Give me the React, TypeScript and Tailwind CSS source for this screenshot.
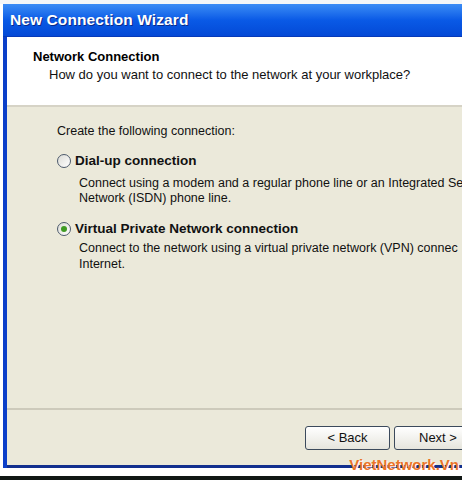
import React from "react";

export default function App() {
  const font = { fontFamily: '"Liberation Sans", Arial, sans-serif' };
  return (
    <div className="w-[462px] h-[480px] overflow-hidden bg-white flex flex-col" style={font}>
      <div className="h-[4px] bg-[#f4f6f8] shrink-0" />
      <div className="flex-1 flex min-h-0 pl-[3px]">
        <div className="flex-1 flex flex-col min-w-0 bg-[#0b3fc9] pl-[4px] pb-[0px] -mr-[20px]">
          {/* title bar */}
          <div className="h-[33px] shrink-0 -ml-[4px] pl-[7px] flex items-center bg-gradient-to-b from-[#3b8cf5] via-[#0a5ae6] to-[#0449d6] border-b border-[#0639b8]">
            <span className="text-white font-bold text-[15.5px] tracking-[0.1px] [text-shadow:1px_1px_0_#0a2a8a]">New Connection Wizard</span>
          </div>
          {/* header */}
          <div className="h-[70px] shrink-0 bg-white border-b-2 border-[#d6d3c6] pl-[26px] pt-[12px]">
            <div className="font-bold text-[13px] text-black leading-[16px]">Network Connection</div>
            <div className="text-[13px] text-[#111] leading-[16px] pl-[16px] mt-[2px] whitespace-nowrap">
              How do you want to connect to the network at your workplace?
            </div>
          </div>
          {/* body */}
          <div className="flex-1 bg-[#ebe9da] flex flex-col min-h-0 border-b-[3px] border-[#12308e]">
            <div className="flex-1 pl-[50px] pt-[16px] whitespace-nowrap text-[12.5px] text-[#111] overflow-hidden">
              <div className="leading-[16px]">Create the following connection:</div>
              <div className="mt-[14px] flex items-center gap-[4px]">
                <span className="w-[14px] h-[14px] rounded-full border border-[#4d5a6c] bg-gradient-to-br from-[#dcdcd6] to-white" />
                <span className="font-bold text-[13.5px] leading-[16px]">Dial-up connection</span>
              </div>
              <div className="pl-[22px] mt-[7px] leading-[15px]">
                <div>Connect using a modem and a regular phone line or an Integrated Se</div>
                <div>Network (ISDN) phone line.</div>
              </div>
              <div className="mt-[15px] flex items-center gap-[4px]">
                <span className="w-[14px] h-[14px] rounded-full border border-[#4d5a6c] bg-gradient-to-br from-[#dcdcd6] to-white flex items-center justify-center">
                  <span className="w-[6px] h-[6px] rounded-full bg-[#3f9a24]" />
                </span>
                <span className="font-bold text-[13.5px] leading-[16px]">Virtual Private Network connection</span>
              </div>
              <div className="pl-[22px] mt-[3px] leading-[16px]">
                <div>Connect to the network using a virtual private network (VPN) connec</div>
                <div>Internet.</div>
              </div>
            </div>
            <div className="h-[57px] shrink-0 border-t-2 border-[#cdcabb] flex items-start pt-[16px] pl-[298px] gap-[4px]">
              <button className="w-[85px] h-[24px] shrink-0 rounded-[3px] border border-[#3c4a5c] bg-gradient-to-b from-white to-[#e6e5dd] text-[13px] text-[#111]">&lt; Back</button>
              <button className="w-[90px] h-[24px] shrink-0 rounded-[3px] border border-[#3c4a5c] bg-gradient-to-b from-white to-[#e6e5dd] text-[13px] text-[#111] text-left pl-[24px]">Next &gt;</button>
            </div>
          </div>
        </div>
      </div>
      <div className="h-[8px] bg-white shrink-0 flex justify-end pr-[3px] relative z-10">
        <span className="-mt-[12px] h-[18px] text-[15px] leading-[18px] font-bold text-[#ec7428] [text-shadow:1px_1px_0_#fff] whitespace-nowrap">VietNetwork.Vn</span>
      </div>
      <div className="h-[4px] bg-[#111815] shrink-0" />
    </div>
  );
}
